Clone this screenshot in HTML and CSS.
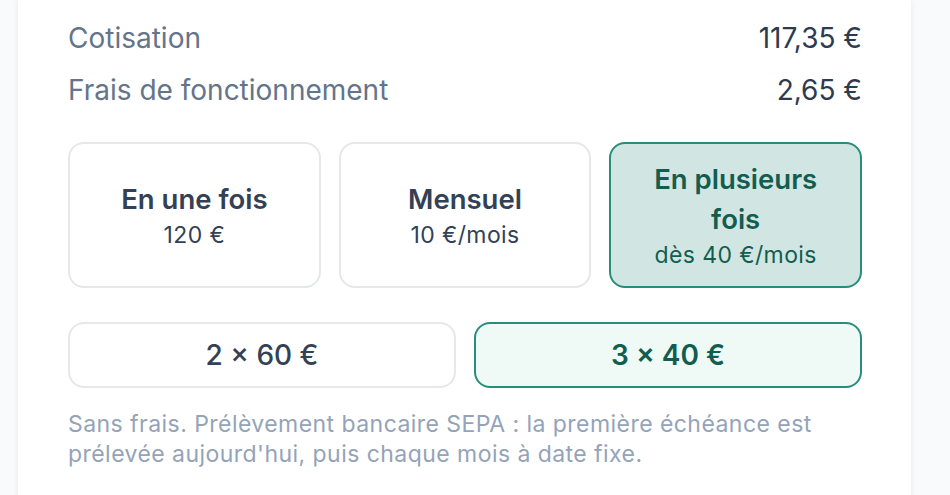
FILE: index.html
```html
<!DOCTYPE html>
<html lang="fr">
  <head>
    <meta charset="UTF-8" />
    <meta name="viewport" content="width=device-width, initial-scale=1.0" />
    <title>Paiement de la cotisation</title>
    <link rel="stylesheet" href="styles.css">
  </head>
  <body>
    <div class="card">
      <div class="line">
        <span class="label">Cotisation</span>
        <span class="amount">117,35 €</span>
      </div>
      <div class="line">
        <span class="label">Frais de fonctionnement</span>
        <span class="amount">2,65 €</span>
      </div>

      <!-- Mode de paiement -->
      <div class="modes">
        <button class="mode">
          <span class="mode-title">En une fois</span>
          <span class="mode-sub">120 €</span>
        </button>
        <button class="mode">
          <span class="mode-title">Mensuel</span>
          <span class="mode-sub">10 €/mois</span>
        </button>
        <button class="mode selected">
          <span class="mode-title">En plusieurs fois</span>
          <span class="mode-sub">dès 40 €/mois</span>
        </button>
      </div>

      <!-- Nombre d'échéances -->
      <div class="splits">
        <button class="split">2 × 60 €</button>
        <button class="split selected">3 × 40 €</button>
      </div>

      <p class="note">
        Sans frais. Prélèvement bancaire SEPA : la première échéance est
        prélevée aujourd'hui, puis chaque mois à date fixe.
      </p>
    </div>
  </body>
</html>
```

FILE: styles.css
```css
body {
  font-family: Inter, "Noto Sans", Arial, sans-serif;
  margin: 0;
  background: #f8fafc;
}

.card {
  background: white;
  margin: 0 39px 0 18px;
  padding: 12px 49px 40px 50px;
  box-shadow: 0 0 6px rgba(15, 23, 42, 0.08);
}

.line {
  display: flex;
  justify-content: space-between;
  font-size: 28px;
  line-height: 52px;
}

.label {
  color: #64748b;
}

.amount {
  color: #2d3a4f;
}

.modes {
  display: grid;
  grid-template-columns: repeat(3, 1fr);
  gap: 18px;
  margin-top: 26px;
}

.mode,
.split {
  font-family: inherit;
  background: white;
  border: 2px solid #e5e7eb;
  border-radius: 16px;
  color: #334155;
  cursor: pointer;
}

.mode {
  height: 146px;
  display: flex;
  flex-direction: column;
  align-items: center;
  justify-content: center;
  padding: 0 30px;
}

.mode-title {
  font-size: 27.5px;
  font-weight: 600;
  line-height: 40px;
}

.mode-sub {
  font-size: 23px;
  line-height: 32px;
  letter-spacing: 0.4px;
}

.splits {
  display: grid;
  grid-template-columns: 1fr 1fr;
  gap: 18px;
  margin-top: 34px;
}

.split {
  height: 66px;
  font-size: 28px;
  font-weight: 500;
}

.mode.selected {
  background: #d1e6e2;
  border-color: #2a8c7d;
  color: #115e50;
}

.split.selected {
  background: #effaf7;
  border-color: #2a8c7d;
  color: #115e50;
  font-weight: 600;
}

.note {
  margin: 21px 0 0;
  font-size: 23px;
  line-height: 30px;
  letter-spacing: 0.45px;
  color: #94a3b8;
}
```
